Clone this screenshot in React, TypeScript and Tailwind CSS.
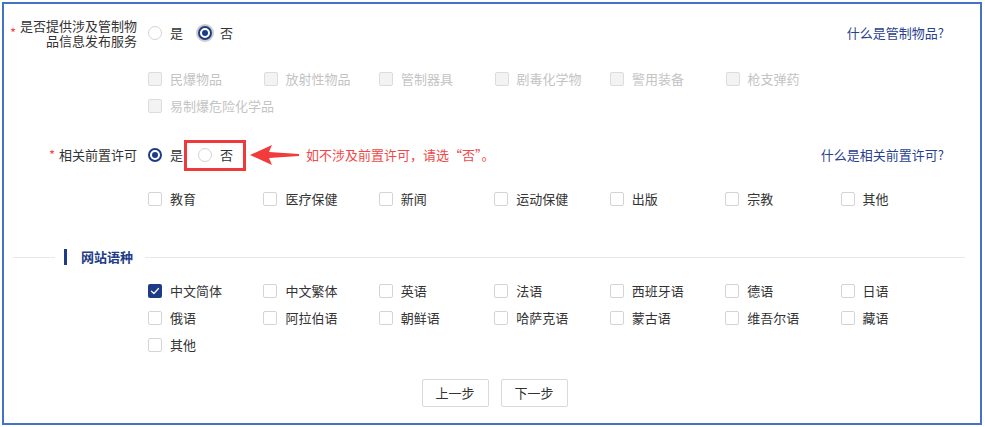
import React from 'react';

const FONT = { fontFamily: '"Noto Sans CJK SC", "Noto Sans", sans-serif' };

const restricted = ['民爆物品', '放射性物品', '管制器具', '剧毒化学物', '警用装备', '枪支弹药', '易制爆危险化学品'];
const permits = ['教育', '医疗保健', '新闻', '运动保健', '出版', '宗教', '其他'];
const languages = [
  '中文简体', '中文繁体', '英语', '法语', '西班牙语', '德语', '日语',
  '俄语', '阿拉伯语', '朝鲜语', '哈萨克语', '蒙古语', '维吾尔语', '藏语',
  '其他',
];

function Radio({ checked, halo }: { checked?: boolean; halo?: boolean }) {
  if (!checked) {
    return <span className="w-[14px] h-[14px] rounded-full border border-[#d4d4d4] bg-white shrink-0" />;
  }
  return (
    <span
      className={`w-[14px] h-[14px] rounded-full border-2 border-[#1d3b87] bg-white shrink-0 flex items-center justify-center ${
        halo ? 'shadow-[0_0_0_2px_#cdcdcd]' : ''
      }`}
    >
      <span className="w-[6px] h-[6px] rounded-full bg-[#1d3b87]" />
    </span>
  );
}

function Checkbox({ label, checked, disabled }: { label: string; checked?: boolean; disabled?: boolean }) {
  return (
    <label className="flex items-center gap-2 h-[27px]">
      {checked ? (
        <span className="w-[14px] h-[14px] rounded-[2px] bg-[#1d3b87] flex items-center justify-center shrink-0">
          <svg width="10" height="10" viewBox="0 0 10 10" fill="none">
            <path d="M1.5 5.2l2.4 2.3 4.6-5" stroke="#fff" strokeWidth="1.2" strokeLinecap="round" strokeLinejoin="round" />
          </svg>
        </span>
      ) : (
        <span
          className={`w-[14px] h-[14px] rounded-[2px] border shrink-0 ${
            disabled ? 'border-[#dcdcdc] bg-[#f3f3f3]' : 'border-[#d4d4d4] bg-white'
          }`}
        />
      )}
      <span className={`text-[13px] leading-[16px] whitespace-nowrap ${disabled ? 'text-[#c4c4c4]' : 'text-[#333]'}`}>
        {label}
      </span>
    </label>
  );
}

function RadioOption({ label, checked, halo }: { label: string; checked?: boolean; halo?: boolean }) {
  return (
    <span className="flex items-center gap-2">
      <Radio checked={checked} halo={halo} />
      <span className="text-[13px] leading-[16px] text-[#333]">{label}</span>
    </span>
  );
}

function Required() {
  return <span className="text-[#f04848] text-[13px] leading-[16px] mr-1">*</span>;
}

export default function App() {
  return (
    <div className="w-[985px] h-[427px] bg-white pl-[2px] pt-[2px]" style={FONT}>
      <div className="w-[980px] h-[423px] border-2 border-[#4472c4] flex flex-col">
        {/* 管制物品 */}
        <div className="flex items-center h-[30px] mt-[14px] mr-[36px]">
          <div className="w-[133px] flex items-center justify-end text-right">
            <Required />
            <span className="flex flex-col items-end text-[13px] leading-[15px] text-[#333]">
              <span>是否提供涉及管制物</span>
              <span>品信息发布服务</span>
            </span>
          </div>
          <div className="flex items-center gap-[15px] ml-[11px]">
            <RadioOption label="是" />
            <RadioOption label="否" checked halo />
          </div>
          <a className="ml-auto text-[13px] leading-[16px] text-[#2a3f8f]">什么是管制物品?</a>
        </div>

        <div className="grid grid-cols-6 w-[693px] ml-[144px] mt-[17px]">
          {restricted.map((r) => (
            <Checkbox key={r} label={r} disabled />
          ))}
        </div>

        {/* 相关前置许可 */}
        <div className="relative flex items-center h-[30px] mt-[21px] mr-[36px]">
          <div className="w-[133px] flex items-center justify-end">
            <Required />
            <span className="text-[13px] leading-[16px] text-[#333]">相关前置许可</span>
          </div>
          <div className="flex items-center gap-[15px] ml-[11px]">
            <RadioOption label="是" checked />
            <RadioOption label="否" />
          </div>
          <div className="absolute left-[180px] top-0 w-[62px] h-[31px] border-[3px] border-[#ee3a3a]" />
          <svg className="ml-[17px]" width="50" height="22" viewBox="0 0 50 22">
            <polygon points="0,11 22,1 19,8 49,10 49,12 19,14 22,21" fill="#f03c3c" />
          </svg>
          <span className="ml-[6px] text-[13px] leading-[16px] text-[#f04848]">如不涉及前置许可，请选“否”。</span>
          <a className="ml-auto text-[13px] leading-[16px] text-[#2a3f8f]">什么是相关前置许可?</a>
        </div>

        <div className="grid grid-cols-7 w-[808px] ml-[144px] mt-[15px]">
          {permits.map((p) => (
            <Checkbox key={p} label={p} />
          ))}
        </div>

        {/* 网站语种 */}
        <div className="flex items-center h-[16px] mt-[37px] pl-[9px] pr-[15px]">
          <span className="w-[42px] h-px bg-[#e8e8e8]" />
          <span className="w-[3px] h-[16px] bg-[#1d3b87] ml-[9px]" />
          <span className="ml-[14px] text-[13px] leading-[16px] font-bold text-[#233c86]">网站语种</span>
          <span className="flex-1 h-px bg-[#e8e8e8] ml-[12px]" />
        </div>

        <div className="grid grid-cols-7 w-[808px] ml-[144px] mt-[12px]">
          {languages.map((l, i) => (
            <Checkbox key={l + i} label={l} checked={i === 0} />
          ))}
        </div>

        <div className="flex justify-center gap-3 mt-[21px] pl-[5px]">
          <button className="w-[67px] h-[28px] border border-[#d9d9d9] rounded-[2px] bg-white text-[13px] text-[#333]">
            上一步
          </button>
          <button className="w-[67px] h-[28px] border border-[#d9d9d9] rounded-[2px] bg-white text-[13px] text-[#333]">
            下一步
          </button>
        </div>
      </div>
    </div>
  );
}
